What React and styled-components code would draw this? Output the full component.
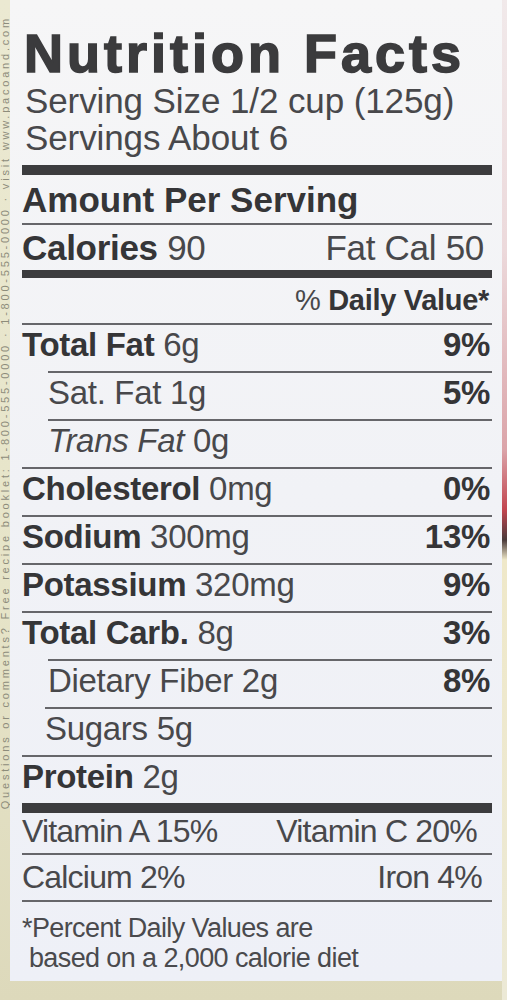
import React from "react";
import styled, { createGlobalStyle } from "styled-components";

const GlobalStyle = createGlobalStyle`
body{
  margin:0;
  background:#e2dfc3;
  font-family:"Liberation Sans", Arial, sans-serif;
}
`;

const Page = styled.div`
display:flex;
width:507px;
height:1000px;
overflow:hidden;
background:linear-gradient(180deg,#ebe9d2 0%,#e6e4c8 60%,#ddd9bb 100%);
`;

//Package edge with the web address
const Spine = styled.div`
width:10px;
flex-shrink:0;
overflow:hidden;
display:flex;
align-items:flex-start;
`;
const SpineText = styled.span`
writing-mode:vertical-rl;
transform:rotate(180deg);
font-size:11px;
line-height:10px;
letter-spacing:2.8px;
color:#8d8c7b;
white-space:nowrap;
padding-bottom:16px;
`;

const Column = styled.div`
width:492px;
display:flex;
flex-direction:column;
`;
const Edge = styled.div`
width:5px;
flex-shrink:0;
background:linear-gradient(180deg,#f1e9ea 0%,#ecd9db 25%,#dba4a9 45%,#c2454f 51%,#4a3a3a 54%,#efe8c9 56%,#ece9d6 100%);
`;

const Label = styled.div`
background:linear-gradient(180deg,#f6f6f7 0%,#f1f2f6 50%,#eef0f7 100%);
padding:24px 10px 8px 12px;
color:#48484b;
`;

const Title = styled.h1`
margin:0 0 0 2px;
font-size:54px;
line-height:58px;
font-weight:700;
letter-spacing:4px;
color:#3b3b3d;
-webkit-text-stroke:1.6px #3b3b3d;
white-space:nowrap;
`;

const Serving = styled.div`
margin-left:3px;
font-size:35px;
line-height:37px;
letter-spacing:-0.1px;
white-space:nowrap;
`;

const Bar = styled.div`
height:${p => p.$h}px;
background:#3c3c3e;
margin-top:${p => p.$top || 0}px;
`;

const Row = styled.div`
box-sizing:border-box;
display:flex;
justify-content:space-between;
align-items:baseline;
height:${p => p.$h || 48}px;
margin-left:${p => p.$indent || 0}px;
border-top:${p => (p.$noLine ? "none" : "2px solid #66666a")};
font-size:${p => p.$size || 33}px;
line-height:${p => p.$lh || 40}px;
padding-top:${p => p.$pt || 0}px;
padding-right:${p => p.$pr || 0}px;
letter-spacing:${p => p.$ls ?? -0.3}px;
white-space:nowrap;
`;

const Name = styled.b`
font-weight:700;
color:#353537;
`;
const Italic = styled.i`
font-style:italic;
`;
const Pct = styled.b`
font-weight:700;
color:#353537;
padding-right:2px;
`;
const Value = styled.span`
font-weight:400;
`;

const Footnote = styled.p`
margin:0;
padding-top:11px;
border-top:2px solid #66666a;
font-size:27px;
line-height:30px;
letter-spacing:-0.6px;
color:#4a4a4d;
`;

const nutrients = [
  { name: "Total Fat", amt: "6g", pct: "9%", bold: true },
  { name: "Sat. Fat", amt: "1g", pct: "5%", indent: 26 },
  { name: "Trans Fat", amt: "0g", indent: 26, italic: true },
  { name: "Cholesterol", amt: "0mg", pct: "0%", bold: true },
  { name: "Sodium", amt: "300mg", pct: "13%", bold: true },
  { name: "Potassium", amt: "320mg", pct: "9%", bold: true },
  { name: "Total Carb.", amt: "8g", pct: "3%", bold: true },
  { name: "Dietary Fiber", amt: "2g", pct: "8%", indent: 26 },
  { name: "Sugars", amt: "5g", indent: 23 },
  { name: "Protein", amt: "2g", bold: true },
];

function NutrientRow({ item }) {
  let label = item.name;
  if (item.bold) label = <Name>{item.name}</Name>;
  if (item.italic) label = <Italic>{item.name}</Italic>;
  return (
    <Row $indent={item.indent}>
      <span>
        {label} <Value>{item.amt}</Value>
      </span>
      {item.pct && <Pct>{item.pct}</Pct>}
    </Row>
  );
}

export default function App() {
  return (
    <>
      <GlobalStyle />
      <Page>
        <Spine>
          <SpineText>
            Questions or comments? Free recipe booklet: 1-800-555-0000 · 1-800-555-0000 · visit www.pacoand.com
          </SpineText>
        </Spine>
        <Column>
          <Label>
            <Title>Nutrition Facts</Title>
            <Serving>Serving Size 1/2 cup (125g)</Serving>
            <Serving>Servings About 6</Serving>
            <Bar $h={10} $top={9} />
            <Row $noLine $h={48} $size={35} $lh={46} $pt={2} $ls={0}>
              <Name>Amount Per Serving</Name>
            </Row>
            <Row $h={47} $size={35} $lh={45} $pr={8}>
              <span>
                <Name>Calories</Name> <Value>90</Value>
              </span>
              <Value>Fat Cal 50</Value>
            </Row>
            <Bar $h={8} />
            <Row $noLine $h={45} $size={29} $lh={45} $pr={3}>
              <span />
              <span>
                % <Name>Daily Value*</Name>
              </span>
            </Row>
            {nutrients.map(item => (
              <NutrientRow key={item.name} item={item} />
            ))}
            <Bar $h={10} />
            <Row $noLine $h={40} $size={32} $lh={36} $pr={15} $ls={-0.8}>
              <span>Vitamin A 15%</span>
              <span>Vitamin C 20%</span>
            </Row>
            <Row $h={47} $size={32} $lh={44} $pr={10} $ls={-0.8}>
              <span>Calcium 2%</span>
              <span>Iron 4%</span>
            </Row>
            <Footnote>
              *Percent Daily Values are
              <br />
              &nbsp;based on a 2,000 calorie diet
            </Footnote>
          </Label>
        </Column>
        <Edge />
      </Page>
    </>
  );
}
